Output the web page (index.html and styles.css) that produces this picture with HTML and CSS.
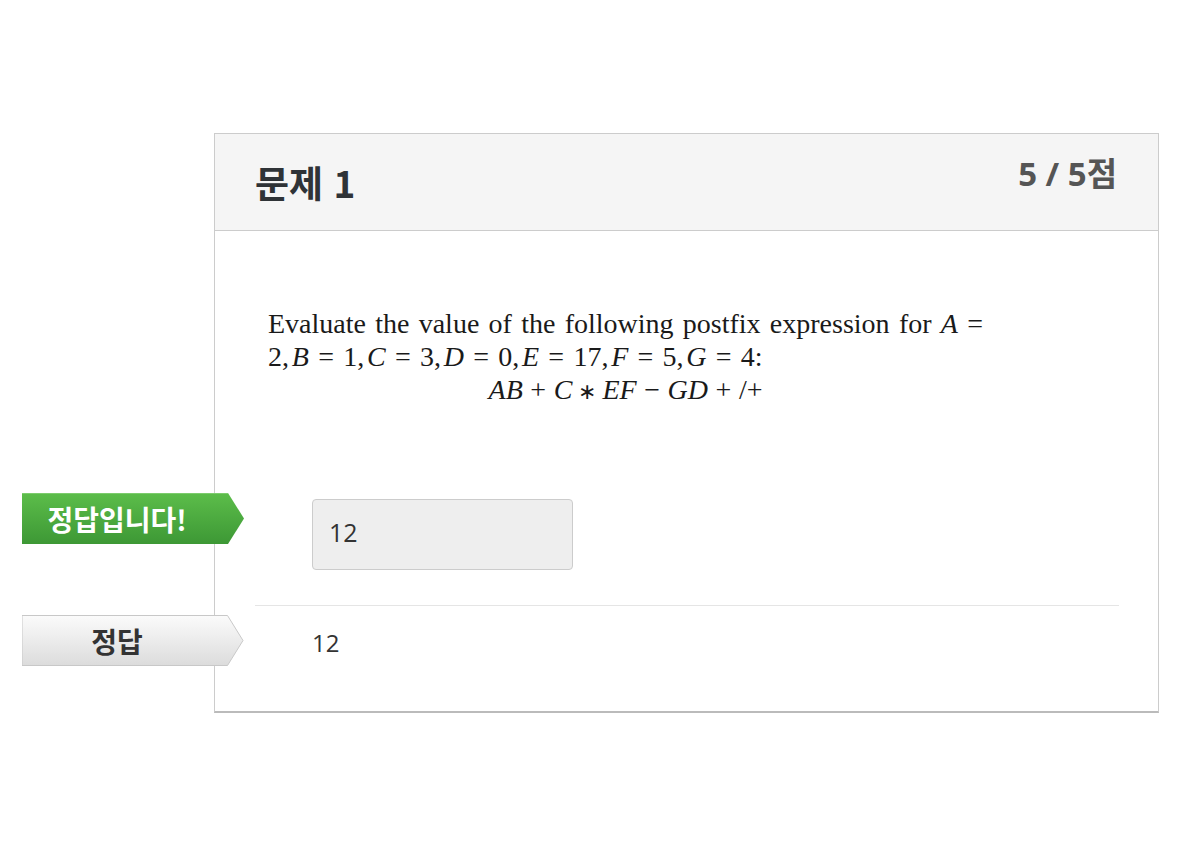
FILE: index.html
```html
<!DOCTYPE html>
<html lang="ko">
<head>
<meta charset="utf-8">
<title>문제 1</title>
<link rel="stylesheet" href="styles.css">
</head>
<body>
<div class="page">
  <div class="card">
    <div class="card-header">
      <h2 class="title">문제 1</h2>
      <div class="score">5 / 5점</div>
    </div>
    <div class="card-body">
      <div class="question">
        <div class="line justify">Evaluate the value of the following postfix expression for <i>A</i>&nbsp;=</div>
        <div class="line">2,<span class="th"></span><i>B</i><span class="rel">=</span>1,<span class="th"></span><i>C</i><span class="rel">=</span>3,<span class="th"></span><i>D</i><span class="rel">=</span>0,<span class="th"></span><i>E</i><span class="rel">=</span>17,<span class="th"></span><i>F</i><span class="rel">=</span>5,<span class="th"></span><i>G</i><span class="rel">=</span>4:</div>
        <div class="line center"><i>AB</i><span class="bin">+</span><i>C</i><span class="bin ast">∗</span><i>EF</i><span class="bin">−</span><i>GD</i><span class="bin">+</span>/+</div>
      </div>

      <div class="answer-row">
        <div class="badge badge-green">
          <svg class="badge-bg" width="222" height="51" viewBox="0 0 222 51">
            <defs>
              <linearGradient id="g1" x1="0" y1="0" x2="0" y2="1">
                <stop offset="0" stop-color="#5cbd4a"/>
                <stop offset="1" stop-color="#3d9835"/>
              </linearGradient>
            </defs>
            <polygon points="0,0 206,0 222,25.5 206,51 0,51" fill="url(#g1)"/>
            <line x1="0" y1="0.5" x2="206" y2="0.5" stroke="#7ccc6c" stroke-width="1"/>
          </svg>
          <span class="badge-text">정답입니다!</span>
        </div>
        <div class="input-box">12</div>
      </div>

      <div class="sep"></div>

      <div class="correct-row">
        <div class="badge badge-gray">
          <svg class="badge-bg" width="222" height="51" viewBox="0 0 222 51">
            <defs>
              <linearGradient id="g2" x1="0" y1="0" x2="0" y2="1">
                <stop offset="0" stop-color="#fbfbfb"/>
                <stop offset="1" stop-color="#dcdcdc"/>
              </linearGradient>
            </defs>
            <polygon points="0,0.5 205.5,0.5 221,25.5 205.5,50.5 0,50.5" fill="url(#g2)" stroke="#c8c8c8" stroke-width="1"/>
          </svg>
          <span class="badge-text dark">정답</span>
        </div>
        <div class="correct-value">12</div>
      </div>
    </div>
  </div>
</div>
</body>
</html>
```

FILE: styles.css
```css
* { box-sizing: border-box; }

html, body {
  margin: 0;
  padding: 0;
  background: #ffffff;
}

body {
  font-family: "Open Sans", "Noto Sans CJK KR", sans-serif;
  color: #333333;
}

.page {
  padding: 133px 0 0 214px;
}

.card {
  width: 945px;
  border: 1px solid #cccccc;
  border-bottom: 2px solid #bbbbbb;
  background: #ffffff;
}

.card-header {
  height: 97px;
  background: #f5f5f5;
  border-bottom: 1px solid #cccccc;
  display: flex;
  justify-content: space-between;
  align-items: flex-start;
  padding: 24px 41px 0 40px;
}

.title {
  margin: 0;
  font-family: "Noto Sans CJK KR", sans-serif;
  font-weight: 700;
  font-size: 37px;
  line-height: 48px;
  color: #2f3337;
}

.score {
  font-family: "Open Sans", "Noto Sans CJK KR", sans-serif;
  font-weight: 700;
  font-size: 33px;
  line-height: 40px;
  margin-top: -4px;
  color: #555555;
}

.card-body {
  padding: 0 39px 0 40px;
}

.question {
  margin: 76px 0 0 13px;
  width: 715px;
  font-family: "Liberation Serif", "Times New Roman", serif;
  font-size: 28px;
  line-height: 33px;
  color: #1a1a1a;
}

.question .line { white-space: nowrap; height: 33px; }
.question .justify {
  white-space: normal;
  text-align: justify;
  text-align-last: justify;
}
.question .center { text-align: center; padding-left: 0; }
.question i { font-style: italic; }
.rel { margin: 0 0.33em; }
.bin { margin: 0 0.27em; }
.ast { font-size: 0.8em; line-height: 0; }
.th { display: inline-block; width: 0.1em; }

.answer-row {
  position: relative;
  margin-top: 93px;
  padding-left: 57px;
  height: 70px;
}

.input-box {
  width: 261px;
  height: 71px;
  background: #eeeeee;
  border: 1px solid #cccccc;
  border-radius: 4px;
  padding-left: 16px;
  font-size: 25px;
  line-height: 64px;
  color: #333333;
}

.sep {
  margin-top: 36px;
  border-top: 1px solid #e5e5e5;
}

.correct-row {
  position: relative;
  padding: 22px 0 53px 57px;
}

.correct-value {
  font-size: 24px;
  line-height: 30px;
  color: #333333;
}

.badge {
  position: absolute;
  left: -233px;
  width: 222px;
  height: 51px;
  display: flex;
  align-items: center;
  justify-content: center;
  padding-right: 32px;
}

.badge-green { top: -6px; }
.badge-gray { top: 9px; }

.badge-bg {
  position: absolute;
  left: 0;
  top: 0;
}

.badge-text {
  position: relative;
  font-family: "Noto Sans CJK KR", sans-serif;
  font-weight: 700;
  font-size: 28px;
  line-height: 30px;
  color: #ffffff;
}

.badge-text.dark { color: #333333; }
```
